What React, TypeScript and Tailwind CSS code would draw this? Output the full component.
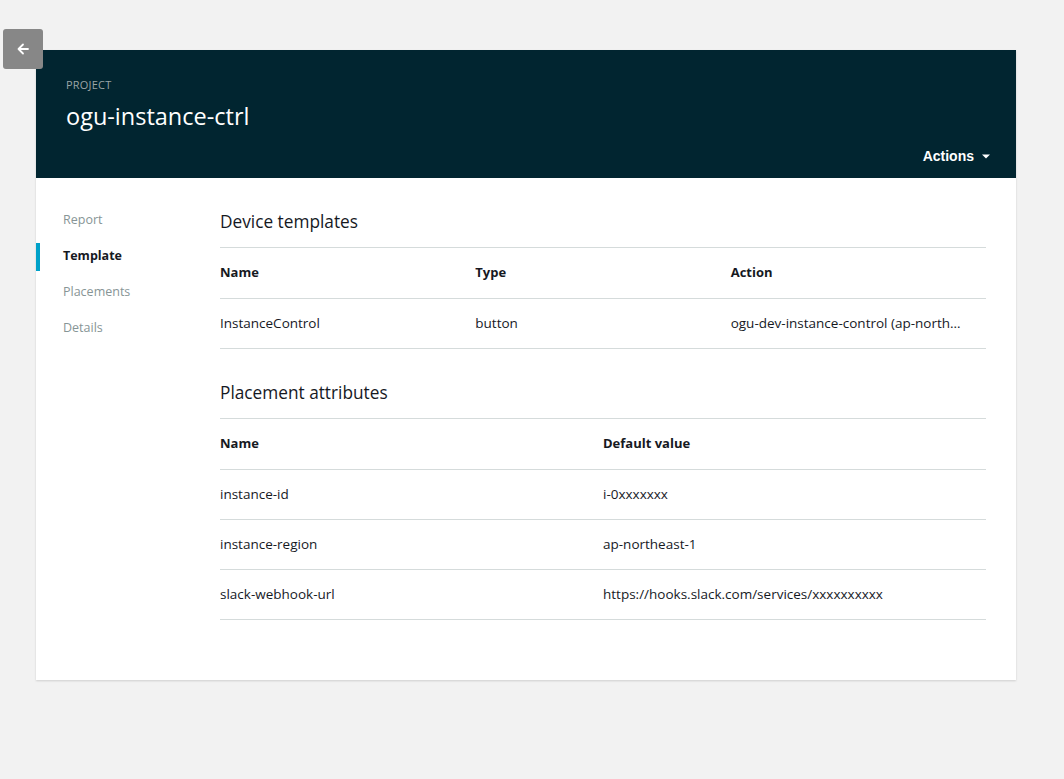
import React from "react";

const nav = ["Report", "Template", "Placements", "Details"];

export default function App() {
  return (
    <div className="min-h-[779px] w-full bg-[#f2f2f2] relative" style={{ fontFamily: '"Open Sans", "Noto Sans", sans-serif' }}>
      <button className="absolute left-[3px] top-[29px] w-[40px] h-[40px] rounded-[3px] flex items-center justify-center z-10" style={{ backgroundColor: "#878787" }}>
        <svg width="14" height="14" viewBox="0 0 14 14" fill="none" stroke="#ffffff" strokeWidth="1.8" strokeLinecap="round" strokeLinejoin="round">
          <path d="M12 7H2.5M7 2.5L2.5 7L7 11.5" />
        </svg>
      </button>
      <div className="pt-[50px] pl-[36px]">
        <div className="w-[980px] bg-white shadow-[0_1px_2px_rgba(0,0,0,0.15)]">
          <div className="h-[128px] bg-[#012530] pl-[30px] pr-[26px] pt-[27px] flex flex-col">
            <div className="text-[11px] leading-[16px] text-[#9aa4a6] tracking-[0.2px]">PROJECT</div>
            <div className="mt-[8px] text-[23.5px] leading-[30px] text-white">ogu-instance-ctrl</div>
            <div className="mt-auto mb-[11px] self-end flex items-center gap-[8px] text-[14px] font-bold text-white" style={{ fontFamily: '"Liberation Sans", Arial, sans-serif' }}>
              <span>Actions</span>
              <svg width="8" height="5" viewBox="0 0 8 5"><path d="M0 0.5H8L4 4.5Z" fill="#ffffff" /></svg>
            </div>
          </div>
          <div className="flex pb-[60px]">
            <div className="w-[184px] pt-[24px] flex flex-col">
              {nav.map((n) => (
                <div key={n} className="h-[36px] flex items-center relative pl-[27px]">
                  {n === "Template" && <div className="absolute left-0 top-[5px] w-[4px] h-[28px] bg-[#00a1c9]" />}
                  <span className={n === "Template" ? "text-[12.5px] font-bold text-[#16191f]" : "text-[12.5px] text-[#879596]"}>{n}</span>
                </div>
              ))}
            </div>
            <div className="w-[766px] pt-[33px] text-[#16191f]">
              <h2 className="text-[17.25px] leading-[22px] h-[36px] text-[#16191f]">Device templates</h2>
              <div className="border-t border-[#d5dbdb]">
                <div className="grid grid-cols-3 h-[51px] items-center border-b border-[#d5dbdb] text-[13px] font-bold text-[#16191f]">
                  <div>Name</div><div>Type</div><div>Action</div>
                </div>
                <div className="grid grid-cols-3 h-[50px] items-center border-b border-[#d5dbdb] text-[13.5px]">
                  <div>InstanceControl</div><div>button</div><div className="whitespace-nowrap">ogu-dev-instance-control (ap-north…</div>
                </div>
              </div>
              <h2 className="mt-[33px] text-[17.25px] leading-[22px] h-[36px] text-[#16191f]">Placement attributes</h2>
              <div className="border-t border-[#d5dbdb]">
                <div className="grid grid-cols-2 h-[51px] items-center border-b border-[#d5dbdb] text-[13px] font-bold">
                  <div>Name</div><div>Default value</div>
                </div>
                {[
                  ["instance-id", "i-0xxxxxxx"],
                  ["instance-region", "ap-northeast-1"],
                  ["slack-webhook-url", "https://hooks.slack.com/services/xxxxxxxxxx"],
                ].map(([a, b]) => (
                  <div key={a} className="grid grid-cols-2 h-[50px] items-center border-b border-[#d5dbdb] text-[13.5px]">
                    <div>{a}</div><div>{b}</div>
                  </div>
                ))}
              </div>
            </div>
          </div>
        </div>
      </div>
    </div>
  );
}
